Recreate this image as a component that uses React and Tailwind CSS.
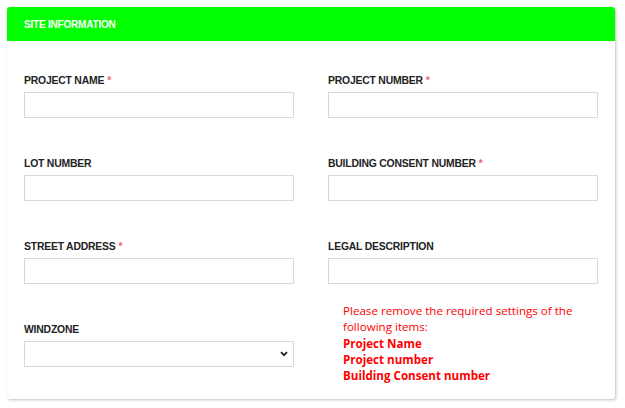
import React from "react";

const Label = ({ text, required }) => (
  <label className="block h-[14px] mb-[4px] text-[10.4px] leading-[14px] font-bold tracking-[-0.2px] text-[#222] font-['Liberation_Sans',Arial,sans-serif] uppercase">
    {text}
    {required && <span className="text-[#ef6b6b] ml-[3px]">*</span>}
  </label>
);

const Field = ({ text, required }) => (
  <div>
    <Label text={text} required={required} />
    <input type="text" className="block w-full h-[26px] bg-white border border-[#d8d8d8] outline-none" />
  </div>
);

export default function App() {
  return (
    <div className="w-[625px] h-[408px] bg-white pt-[7px] pl-[7px]">
      <div className="w-[608px] bg-white rounded-[3px] shadow-[1px_1px_3px_rgba(0,0,0,0.25)] overflow-hidden">
        {/* header */}
        <div className="h-[34px] bg-[#00ff00] flex items-center px-[17px]">
          <span className="text-white text-[10px] font-bold font-['Liberation_Sans',Arial,sans-serif] tracking-[-0.2px]">
            SITE INFORMATION
          </span>
        </div>

        {/* form */}
        <div className="grid grid-cols-2 gap-x-[34px] gap-y-[39px] px-[17px] pt-[33px] pb-[15px]">
          <Field text="Project Name" required />
          <Field text="Project Number" required />
          <Field text="Lot Number" />
          <Field text="Building Consent Number" required />
          <Field text="Street Address" required />
          <Field text="Legal Description" />

          <div>
            <Label text="Windzone" />
            <div className="relative h-[26px] border border-[#d8d8d8] bg-white">
              <select className="w-full h-full appearance-none bg-transparent outline-none" />
              <svg className="absolute right-[5px] top-[9px] pointer-events-none" width="8" height="6" viewBox="0 0 8 6">
                <path d="M1 1.2 L4 4.2 L7 1.2" fill="none" stroke="#222" strokeWidth="1.8" />
              </svg>
            </div>
          </div>

          <div className="-mt-[20px] pl-[15px] text-[#ff0000] text-[11.6px] leading-[16px] font-['Open_Sans',sans-serif]">
            <p className="mb-[1px]">Please remove the required settings of the following items:</p>
            <p className="font-bold">Project Name</p>
            <p className="font-bold">Project number</p>
            <p className="font-bold">Building Consent number</p>
          </div>
        </div>
      </div>
    </div>
  );
}
